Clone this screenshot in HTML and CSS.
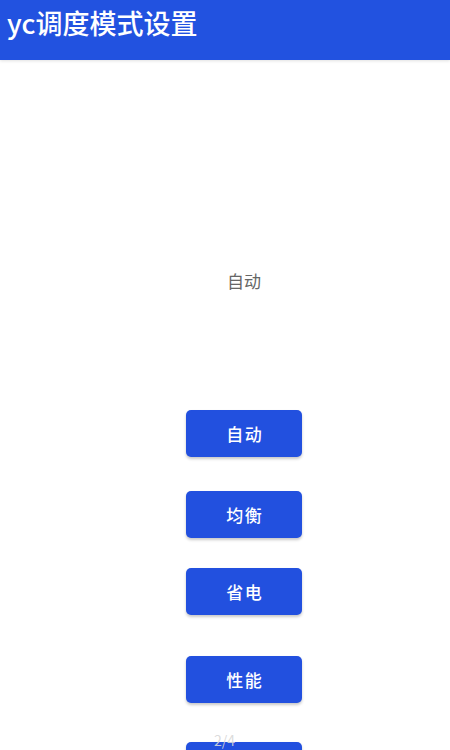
FILE: index.html
```html
<!DOCTYPE html>
<html lang="zh-CN">
<head>
    <meta charset="UTF-8">
    <meta name="viewport" content="width=device-width, initial-scale=1.0">
    <title>yc调度模式设置</title>
    <link rel="stylesheet" href="styles.css">
</head>
<body>
    <header class="app-bar">
        <h1>yc调度模式设置</h1>
    </header>
    <main class="content">
        <p class="current-mode">自动</p>
        <div class="mode-list">
            <button class="mode-btn">自动</button>
            <button class="mode-btn">均衡</button>
            <button class="mode-btn">省电</button>
            <button class="mode-btn">性能</button>
            <button class="mode-btn"></button>
        </div>
    </main>
    <div class="page-indicator">2/4</div>
</body>
</html>
```

FILE: styles.css
```css
* {
    margin: 0;
    padding: 0;
    box-sizing: border-box;
}

body {
    font-family: "Noto Sans CJK SC", "Noto Sans", sans-serif;
    background: #fff;
    height: 750px;
    overflow: hidden;
}

.app-bar {
    background: #2252e0;
    height: 60px;
    padding: 4px 0 0 7px;
    box-shadow: 0 1px 3px rgba(0, 0, 0, 0.12);
}

.app-bar h1 {
    color: #fff;
    font-size: 27px;
    font-weight: 500;
    line-height: 38px;
}

.content {
    padding-left: 38px;
    display: flex;
    flex-direction: column;
    align-items: center;
}

.current-mode {
    margin-top: 208px;
    font-size: 17px;
    line-height: 26px;
    color: #666;
}

.mode-list {
    margin-top: 116px;
    display: flex;
    flex-direction: column;
    align-items: center;
}

.mode-btn {
    width: 116px;
    height: 47px;
    border: none;
    border-radius: 5px;
    background: #2250df;
    color: #fff;
    font-family: inherit;
    font-size: 17px;
    font-weight: 500;
    letter-spacing: 1.5px;
    padding-left: 1.5px;
    box-shadow: 0 2px 3px rgba(0, 0, 0, 0.22);
}

.mode-btn:nth-child(2) {
    margin-top: 34px;
}

.mode-btn:nth-child(3) {
    margin-top: 30px;
}

.mode-btn:nth-child(4) {
    margin-top: 41px;
}

.mode-btn:nth-child(5) {
    margin-top: 39px;
}

.page-indicator {
    position: absolute;
    left: 214px;
    top: 731px;
    font-size: 14px;
    line-height: 18px;
    color: rgba(215, 215, 215, 0.9);
}
```
